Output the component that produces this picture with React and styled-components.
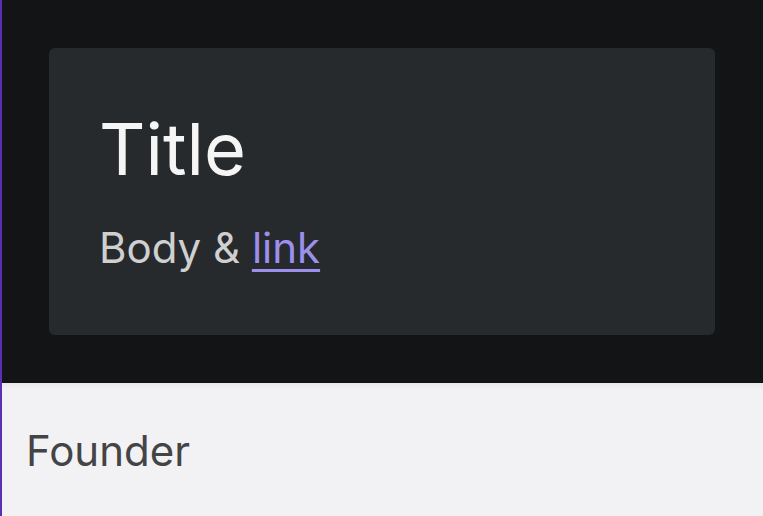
import React from 'react';
import styled, { createGlobalStyle } from 'styled-components';

const GlobalStyle = createGlobalStyle`
  html, body {
    margin: 0;
    padding: 0;
    background: #f2f2f4;
  }
  body {
    font-family: Inter, "Noto Sans", sans-serif;
  }
`;

const Page = styled.div`
  min-height: 516px;
  border-left: 2px solid #5a2fb5;
  background: #f2f2f4;
`;

const Stage = styled.section`
  background: #131416;
  padding: 48px 48px 48px 47px;
`;

const Card = styled.div`
  background: #272a2d;
  border-radius: 6px;
  padding: 58px 50px 56px;
`;

const Title = styled.h1`
  margin: 0;
  font-size: 72px;
  line-height: 1.2;
  font-weight: 400;
  color: #f5f5f5;
`;

const Body = styled.p`
  margin: 24px 0 0;
  font-size: 42px;
  line-height: 1.5;
  color: #d0d0d0;
`;

const Link = styled.a`
  color: #9d90ec;
  text-decoration: underline;
  text-decoration-thickness: 3px;
  text-underline-offset: 6px;
`;

const Footer = styled.section`
  padding: 36px 24px 34px;
  box-shadow: inset 0 6px 6px -4px rgba(0, 0, 0, 0.06);
`;

const Role = styled.div`
  font-size: 42px;
  line-height: 1.5;
  color: #444446;
`;

export default function App() {
  return (
    <>
      <GlobalStyle />
      <Page>
        <Stage>
          <Card>
            <Title>Title</Title>
            <Body>
              Body &amp; <Link href="#">link</Link>
            </Body>
          </Card>
        </Stage>
        <Footer>
          <Role>Founder</Role>
        </Footer>
      </Page>
    </>
  );
}
